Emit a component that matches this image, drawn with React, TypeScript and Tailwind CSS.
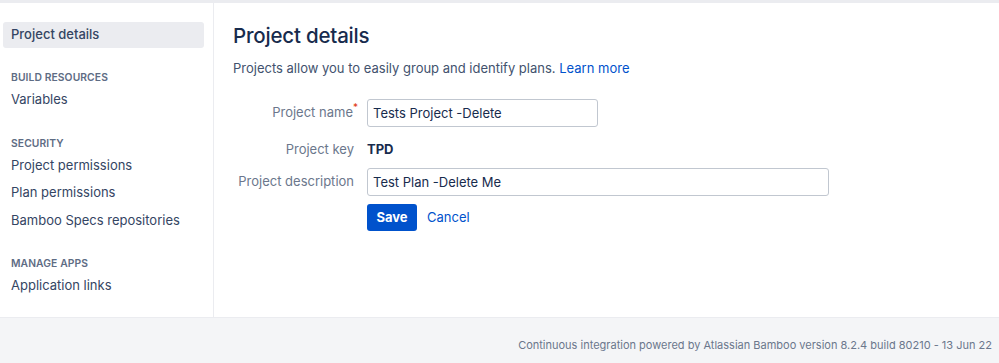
import React from "react";

const sections = [
  { title: "BUILD RESOURCES", items: ["Variables"] },
  { title: "SECURITY", items: ["Project permissions", "Plan permissions", "Bamboo Specs repositories"] },
  { title: "MANAGE APPS", items: ["Application links"] },
];

export default function App() {
  return (
    <div className="w-[999px] h-[363px] bg-white flex flex-col font-['Inter',sans-serif] text-[#172b4d] overflow-hidden">
      <div className="h-[3px] bg-[#ebecf0] shrink-0" />
      <div className="flex h-[314px] shrink-0">
        {/* sidebar */}
        <aside className="w-[214px] shrink-0 border-r border-[#ebecf0] pt-[19px] pl-[3px] pr-[9px]">
          <div className="h-[26px] rounded-[3px] bg-[#ebecf0] flex items-center pl-[8px] text-[13px] font-medium text-[#344563]">
            Project details
          </div>
          {sections.map((s) => (
            <div key={s.title} className="mt-[22px] pl-[8px]">
              <div className="text-[10.3px] font-semibold text-[#5e6c84] leading-[14px] tracking-[0.1px]">{s.title}</div>
              <div className="mt-[2px] flex flex-col">
                {s.items.map((it) => (
                  <div key={it} className="h-[27.5px] flex items-center text-[13px] text-[#344563]">
                    {it}
                  </div>
                ))}
              </div>
            </div>
          ))}
        </aside>

        {/* main */}
        <main className="flex-1 pl-[19px] pt-[18px]">
          <h1 className="text-[20.5px] font-medium leading-[30px] text-[#172b4d] tracking-[-0.2px]">Project details</h1>
          <p className="mt-[8px] text-[13px] text-[#42526e] leading-[18px]">
            Projects allow you to easily group and identify plans.{" "}
            <a className="text-[#0052cc]">Learn more</a>
          </p>

          <div className="mt-[22px] grid grid-cols-[121px_1fr] gap-x-[13px] items-center text-[13px]">
            <div className="h-[28px] flex items-center justify-end text-[#6b778c]">
              Project name
              <span className="text-[#de350b] text-[10px] self-start mt-[1px] mr-[-4px]">*</span>
            </div>
            <input
              defaultValue="Tests Project -Delete"
              className="w-[231px] h-[28px] border border-[#c1c7d0] rounded-[3px] px-[5px] text-[13px] text-[#172b4d] outline-none"
            />

            <div className="h-[41px] flex items-center justify-end text-[#6b778c] pt-[4px]">Project key</div>
            <div className="font-bold text-[#172b4d] pt-[4px]">TPD</div>

            <div className="h-[28px] flex items-center justify-end text-[#6b778c]">Project description</div>
            <input
              defaultValue="Test Plan -Delete Me"
              className="w-[462px] h-[28px] border border-[#c1c7d0] rounded-[3px] px-[5px] text-[13px] text-[#172b4d] outline-none"
            />

            <div />
            <div className="mt-[8px] flex items-center gap-[10px]">
              <button className="h-[27px] w-[50px] rounded-[3px] bg-[#0052cc] text-white font-bold text-[13px]">Save</button>
              <a className="text-[#0052cc]">Cancel</a>
            </div>
          </div>
        </main>
      </div>

      {/* footer */}
      <footer className="flex-1 border-t border-[#ebecf0] bg-[#f4f5f7] flex items-center justify-end pr-[7px] pt-[10px] text-[11px] text-[#6b778c]">
        Continuous integration powered by Atlassian Bamboo version 8.2.4 build 80210 - 13 Jun 22
      </footer>
    </div>
  );
}
